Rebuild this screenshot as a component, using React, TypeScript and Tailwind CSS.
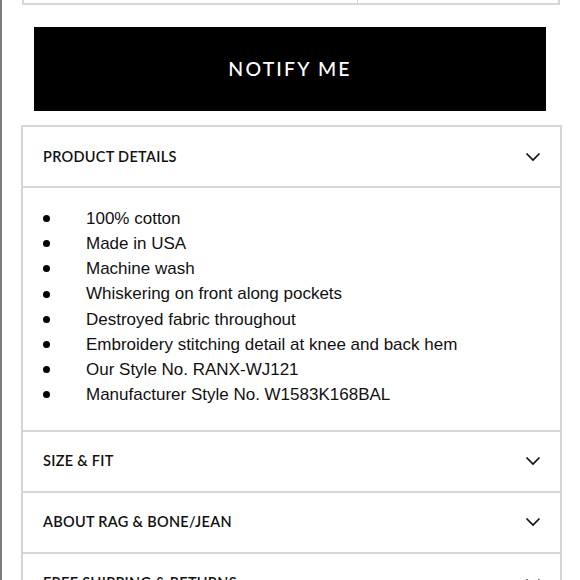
const details = [
  '100% cotton',
  'Made in USA',
  'Machine wash',
  'Whiskering on front along pockets',
  'Destroyed fabric throughout',
  'Embroidery stitching detail at knee and back hem',
  'Our Style No. RANX-WJ121',
  'Manufacturer Style No. W1583K168BAL',
]

const sections = ['SIZE & FIT', 'ABOUT RAG & BONE/JEAN', 'FREE SHIPPING & RETURNS']

function Chevron() {
  return (
    <svg width="16" height="10" viewBox="0 0 16 10" fill="none" className="shrink-0">
      <path d="M1.5 1.5L8 8l6.5-6.5" stroke="#111" strokeWidth="1.7" />
    </svg>
  )
}

function Header({ title }: { title: string }) {
  return (
    <div className="h-[59px] flex items-center justify-between pl-[20px] pr-[19px]">
      <span className="text-[14.5px] font-semibold tracking-[0.02em] text-[#111] font-['Lato',sans-serif]">
        {title}
      </span>
      <Chevron />
    </div>
  )
}

export default function App() {
  return (
    <div className="w-[580px] h-[580px] overflow-hidden bg-white border-l-2 border-[#7d7d7d]">
      <div className="ml-[20px] w-[538px] h-[5px] flex border-x-2 border-b-2 border-[#d6d6d6]">
        <div className="w-[334px] border-r border-[#d6d6d6]" />
      </div>

      <button className="mt-[22px] ml-[32px] w-[512px] h-[84px] bg-black text-white text-[19.5px] font-medium tracking-[0.11em] font-['Lato',sans-serif]">
        NOTIFY ME
      </button>

      <div className="mt-[14px] ml-[19px] w-[541px] border-2 border-[#d6d6d6]">
        <Header title="PRODUCT DETAILS" />
        <ul className="border-t-2 border-[#d6d6d6] pt-[18px] pb-[22px] font-['Liberation_Sans',Arial,sans-serif] text-[17px] text-[#111]">
          {details.map((d) => (
            <li key={d} className="h-[25.2px] flex items-center">
              <span className="w-[7px] h-[7px] rounded-full bg-black ml-[20px] mr-[36px]" />
              {d}
            </li>
          ))}
        </ul>
        {sections.map((s) => (
          <div key={s} className="border-t-2 border-[#d6d6d6]">
            <Header title={s} />
          </div>
        ))}
      </div>
    </div>
  )
}
